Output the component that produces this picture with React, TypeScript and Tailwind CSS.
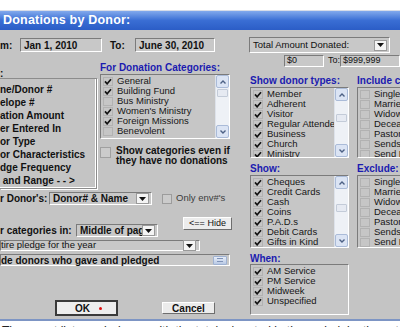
import React from 'react';

type Item = { label: string; checked: boolean };

const Check = () => (
    <svg width="8" height="7" viewBox="0 0 8 7">
        <path d="M1 3.4 L3.1 5.8 L7 1.2" fill="none" stroke="#141414" strokeWidth="1.7" />
    </svg>
);

const Chevron = ({ up }: { up: boolean }) => (
    <svg width="8" height="6" viewBox="0 0 8 6">
        <path d={up ? 'M1.5 4.5 L4 2 L6.5 4.5' : 'M1.5 1.5 L4 4 L6.5 1.5'} fill="none" stroke="#4d6185" strokeWidth="1.4" />
    </svg>
);

const DropArrow = () => (
    <span className="w-[13px] h-[11px] bg-[#f4f4f4] border border-[#9a9a9a] flex items-center justify-center shrink-0">
        <svg width="7" height="4" viewBox="0 0 7 4">
            <path d="M0 0 H7 L3.5 4 Z" fill="#111" />
        </svg>
    </span>
);

// Windows-XP style scroll bar inside a list box
const ScrollBar = ({ thumbTop }: { thumbTop: number }) => (
    <div className="w-[14px] flex flex-col bg-[#eef1f6] border-l border-[#dde2ea]">
        <div className="h-[13px] bg-[#dbe4f4] border border-[#aabbd8] rounded-[2px] flex items-center justify-center">
            <Chevron up />
        </div>
        <div className="flex-1 relative">
            <div className="absolute left-[1px] right-[1px] h-[8px] bg-[#e6eaf2] border border-[#c3cbd8] rounded-[1px]" style={{ top: thumbTop }} />
        </div>
        <div className="h-[13px] bg-[#dbe4f4] border border-[#aabbd8] rounded-[2px] flex items-center justify-center">
            <Chevron up={false} />
        </div>
    </div>
);

const ListBox = ({ items, className, thumbTop }: { items: Item[]; className: string; thumbTop?: number }) => (
    <div className={`flex border border-t-[#7b7b7b] border-l-[#7b7b7b] border-r-white border-b-white bg-[#c6c6c6] ${className}`}>
        <div className="flex-1 flex flex-col pt-[1px] pl-[2px] overflow-hidden">
            {items.map(it => (
                <div key={it.label} className="flex items-center h-[10px] gap-[4px] shrink-0">
                    <span className="w-[10px] h-[9px] border border-[#b2b2b2] flex items-center justify-center shrink-0">
                        {it.checked && <Check />}
                    </span>
                    <span className="text-[9.5px] leading-[10px] whitespace-nowrap text-[#161616]">{it.label}</span>
                </div>
            ))}
        </div>
        {thumbTop !== undefined && <ScrollBar thumbTop={thumbTop} />}
    </div>
);

const sunken = 'border border-t-[#7b7b7b] border-l-[#7b7b7b] border-r-white border-b-white bg-[#c8c8c8]';
const raised = 'border border-t-white border-l-white border-r-[#6e6e6e] border-b-[#6e6e6e] bg-[#ececec]';

const categories: Item[] = [
    { label: 'General', checked: true },
    { label: 'Building Fund', checked: true },
    { label: 'Bus Ministry', checked: false },
    { label: "Women's Ministry", checked: true },
    { label: 'Foreign Missions', checked: true },
    { label: 'Benevolent', checked: false },
];

const donorTypes: Item[] = [
    { label: 'Member', checked: true },
    { label: 'Adherent', checked: true },
    { label: 'Visitor', checked: true },
    { label: 'Regular Attender', checked: true },
    { label: 'Business', checked: true },
    { label: 'Church', checked: true },
    { label: 'Ministry', checked: true },
];

const payTypes: Item[] = [
    { label: 'Cheques', checked: true },
    { label: 'Credit Cards', checked: true },
    { label: 'Cash', checked: true },
    { label: 'Coins', checked: true },
    { label: 'P.A.D.s', checked: true },
    { label: 'Debit Cards', checked: true },
    { label: 'Gifts in Kind', checked: true },
];

const statuses: Item[] = [
    { label: 'Single', checked: false },
    { label: 'Married', checked: false },
    { label: 'Widowed', checked: false },
    { label: 'Deceased', checked: false },
    { label: 'Pastor', checked: false },
    { label: 'Sends Mail', checked: false },
    { label: 'Send Email', checked: false },
];

const services: Item[] = [
    { label: 'AM Service', checked: true },
    { label: 'PM Service', checked: true },
    { label: 'Midweek', checked: true },
    { label: 'Unspecified', checked: true },
];

const sortBy = [
    'ne/Donor #',
    'elope #',
    'ation Amount',
    'er Entered In',
    'or Type',
    'or Characteristics',
    'dge Frequency',
    ' and Range - - >',
];

export default function App() {
    return (
        <div className="w-[400px] h-[327px] overflow-hidden bg-white font-['Liberation_Sans',Arial,sans-serif] text-[#111]">
            {/* window top */}
            <div className="h-[11px] bg-white border-b border-[#d8dde8]" />
            <div className="h-[19px] bg-gradient-to-b from-[#82a9ec] via-[#3a6ed4] to-[#2b5dc6] flex items-center pl-[3px]">
                <span className="text-white font-bold text-[12.5px] leading-[19px] tracking-[0.2px]">Donations by Donor:</span>
            </div>

            {/* dialog body */}
            <div className="h-[289px] bg-[#c4c4c4] flex">
                {/* left column */}
                <div className="w-[249px] flex flex-col shrink-0">
                    <div className="mt-[7px] h-[16px] flex items-center">
                        <span className="w-[20px] text-[10px] font-bold">m:</span>
                        <div className={`w-[82px] h-[14px] ${sunken} flex items-center pl-[3px] text-[10px] font-bold`}>Jan 1, 2010</div>
                        <span className="ml-[8px] w-[25px] text-[10px] font-bold">To:</span>
                        <div className={`w-[80px] h-[14px] ${sunken} flex items-center pl-[3px] text-[10px] font-bold`}>June 30, 2010</div>
                    </div>

                    <div className="h-[136px] flex">
                        {/* sort-by group */}
                        <div className="w-[97px] flex flex-col shrink-0">
                            <span className="mt-[17px] h-[8px] text-[10px] font-bold leading-[8px]">:</span>
                            <div className="h-[111px] border border-[#8c8c8c] border-l-0 shadow-[inset_-1px_-1px_0_#ffffff,1px_1px_0_#ffffff] pt-[4px] flex flex-col">
                                {sortBy.map(s => (
                                    <span key={s} className="h-[13px] text-[10px] leading-[13px] font-bold whitespace-pre">{s}</span>
                                ))}
                            </div>
                        </div>

                        {/* categories */}
                        <div className="ml-[3px] w-[130px] flex flex-col">
                            <span className="mt-[9px] h-[12px] text-[10px] leading-[12px] font-bold text-[#1b1bb0]">For Donation Categories:</span>
                            <ListBox items={categories} className="h-[65px] w-[130px]" thumbTop={1} />
                            <div className="mt-[7px] flex">
                                <span className="w-[11px] h-[11px] border border-[#a0a0a0] bg-[#cbcbcb] mt-[1px] shrink-0" />
                                <span className="ml-[5px] text-[10px] leading-[10px] font-bold">Show categories even if<br />they have no donations</span>
                            </div>
                        </div>
                    </div>

                    <div className="mt-[3px] h-[13px] flex items-center">
                        <span className="w-[49px] text-[10px] font-bold whitespace-nowrap">r Donor's:</span>
                        <div className={`w-[103px] h-[13px] ${sunken} flex items-center justify-between pl-[3px] pr-[2px] text-[10px] font-bold`}>
                            <span>Donor# &amp; Name</span>
                            <DropArrow />
                        </div>
                        <span className="ml-[10px] w-[10px] h-[10px] border border-[#9c9c9c] bg-[#cbcbcb]" />
                        <span className="ml-[4px] text-[9.5px] text-[#3c3c3c]">Only env#'s</span>
                    </div>

                    <div className="mt-[12px] h-[20px] flex items-end">
                        <span className="w-[76px] text-[10px] font-bold whitespace-nowrap leading-[13px]">r categories in:</span>
                        <div className={`w-[82px] h-[13px] ${sunken} flex items-center justify-between pl-[3px] pr-[2px] text-[10px] font-bold`}>
                            <span className="whitespace-nowrap overflow-hidden">Middle of pag</span>
                            <DropArrow />
                        </div>
                        <div className={`self-start ml-[25px] w-[49px] h-[13px] ${raised} flex items-center justify-center text-[9px]`}>&lt;== Hide</div>
                    </div>

                    <div className={`mt-[3px] w-[200px] h-[11px] ${sunken} flex items-center justify-between pr-[3px] text-[9.5px]`}>
                        <span className="whitespace-nowrap">tire pledge for the year</span>
                        <DropArrow />
                    </div>

                    <div className={`mt-[3px] w-[230px] h-[12px] ${sunken} flex items-center justify-between pr-[2px] text-[10px] font-bold`}>
                        <span className="whitespace-nowrap">de donors who gave and pledged</span>
                        <span className="w-[14px] h-[9px] bg-gradient-to-b from-[#e6edf8] to-[#b9c9e4] border border-[#9fb2d2] rounded-[1px] flex flex-col justify-center gap-[2px] px-[3px]">
                            <span className="h-px bg-[#7f93b8]" />
                            <span className="h-px bg-[#7f93b8]" />
                        </span>
                    </div>

                    <div className="mt-[34px] h-[16px] flex items-start">
                        <div className="ml-[55px] w-[63px] h-[16px] border-2 border-[#3a3a3a] bg-[#ededed] flex items-center justify-center gap-[9px] text-[10px] font-bold">
                            <span className="ml-[4px]">OK</span>
                            <span className="w-[3px] h-[3px] rounded-full bg-[#e01010]" />
                        </div>
                        <div className={`ml-[44px] mt-[2px] w-[53px] h-[12px] ${raised} flex items-center justify-center text-[10px] font-bold`}>Cancel</div>
                    </div>
                </div>

                {/* right column */}
                <div className="flex-1 flex flex-col overflow-hidden">
                    <div className={`mt-[7px] w-[141px] h-[16px] ${sunken} flex items-center justify-between pl-[3px] pr-[2px] text-[9.5px]`}>
                        <span className="whitespace-nowrap">Total Amount Donated:</span>
                        <DropArrow />
                    </div>

                    <div className="mt-[2px] h-[12px] flex items-center">
                        <div className={`ml-[35px] w-[46px] h-[12px] ${sunken} flex items-center pl-[2px] text-[9px]`}>$0</div>
                        <span className="ml-[4px] w-[14px] text-[9px]">To:</span>
                        <div className={`w-[60px] h-[12px] ${sunken} flex items-center pl-[2px] text-[9px] shrink-0`}>$999,999</div>
                    </div>

                    <div className="mt-[8px] h-[12px] flex text-[10px] leading-[12px] font-bold text-[#1b1bb0] whitespace-nowrap">
                        <span className="w-[108px] pl-[1px] shrink-0">Show donor types:</span>
                        <span>Include characteristics:</span>
                    </div>
                    <div className="h-[71px] flex">
                        <ListBox items={donorTypes} className="ml-[1px] w-[99px] shrink-0" thumbTop={13} />
                        <ListBox items={statuses} className="ml-[8px] w-[80px] shrink-0" />
                    </div>

                    <div className="mt-[5px] h-[12px] flex text-[10px] leading-[12px] font-bold text-[#1b1bb0] whitespace-nowrap">
                        <span className="w-[108px] pl-[1px] shrink-0">Show:</span>
                        <span>Exclude:</span>
                    </div>
                    <div className="h-[73px] flex">
                        <ListBox items={payTypes} className="ml-[1px] w-[99px] shrink-0" thumbTop={15} />
                        <ListBox items={statuses} className="ml-[8px] w-[80px] shrink-0" />
                    </div>

                    <span className="mt-[5px] h-[11px] pl-[1px] text-[10px] leading-[11px] font-bold text-[#1b1bb0]">When:</span>
                    <ListBox items={services} className="ml-[1px] w-[99px] h-[51px]" />
                </div>
            </div>

            {/* edge of the page behind the dialog */}
            <div className="h-[2px] bg-[#7d95c4]" />
            <div className="h-[6px] overflow-hidden pl-[2px]">
                <p className="mt-[4px] text-[12px] leading-[12px] whitespace-nowrap text-[#222]">
                    The report lists each donor, with the totals donated in the period, by the categories you pick here
                </p>
            </div>
        </div>
    );
}
